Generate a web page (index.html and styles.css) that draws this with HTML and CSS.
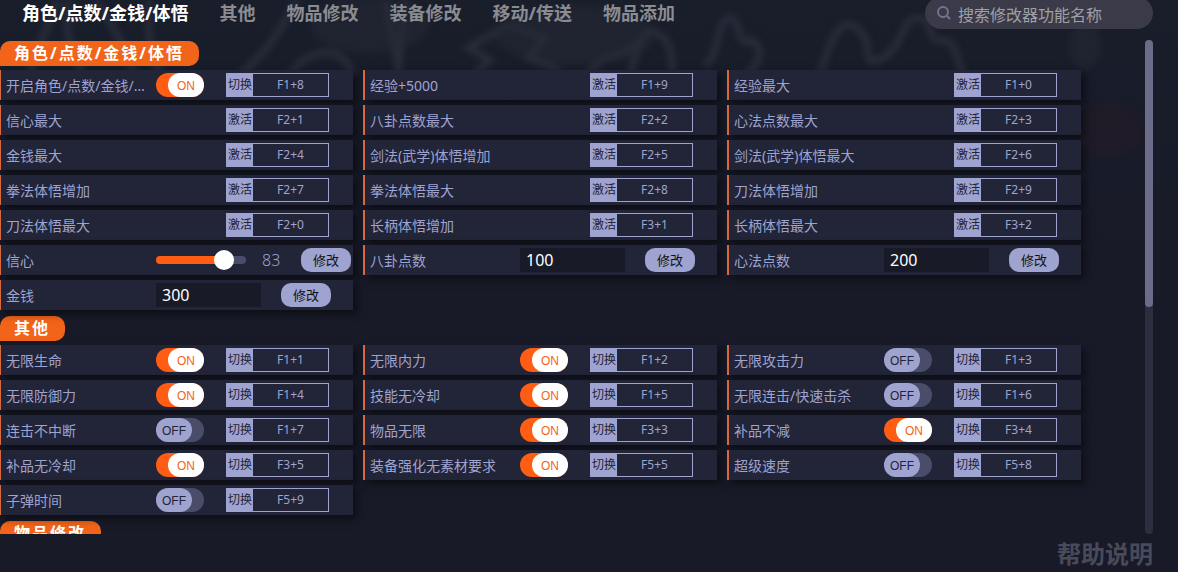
FILE: index.html
```html
<!DOCTYPE html>
<html lang="zh-CN">
<head>
  <meta charset="UTF-8">
  <meta name="viewport" content="width=device-width, initial-scale=1.0">
  <title>修改器</title>
  <link rel="stylesheet" href="styles.css">
</head>
<body>
  <svg class="backdrop" viewBox="0 0 1178 250" aria-hidden="true">
    <path d="M30 75C40 40 50 20 58 0M70 -5C62 20 70 50 82 72M92 -5C110 20 125 45 135 75M150 -5C145 25 150 50 160 75M240 75C275 45 285 20 300 -5M290 75C310 45 345 45 352 75M385 -5L400 75M405 0L398 75M508 25L468 48L490 60L474 75M508 25L545 38L528 58L560 70M590 75C600 50 625 60 640 40M630 75C640 40 645 25 655 32C672 40 672 55 672 72M705 65C720 55 715 25 728 18C742 15 735 50 752 40C765 50 760 65 745 75M820 75C835 20 850 12 866 40C870 55 865 65 878 60C905 50 900 15 920 18C935 20 925 45 945 40C960 45 955 65 965 75"/>
    <ellipse class="smoke" cx="370" cy="25" rx="60" ry="28"/>
    <ellipse class="smoke" cx="575" cy="35" rx="80" ry="30"/>
    <ellipse class="smoke" cx="1085" cy="45" rx="16" ry="24"/>
    <ellipse class="ember" cx="1110" cy="130" rx="32" ry="28"/>
  </svg>

  <header class="topbar">
    <nav class="tabs">
      <a href="#role" class="active">角色/点数/金钱/体悟</a>
      <a href="#other">其他</a>
      <a href="#item-edit">物品修改</a>
      <a href="#equip-edit">装备修改</a>
      <a href="#move">移动/传送</a>
      <a href="#item-add">物品添加</a>
    </nav>
    <label class="search">
      <svg viewBox="0 0 14 14" aria-hidden="true">
        <circle cx="6" cy="6" r="5"/>
        <path d="M10 10L13 13"/>
      </svg>
      <input type="search" placeholder="搜索修改器功能名称" aria-label="搜索修改器功能名称">
    </label>
  </header>

  <main class="panel">
    <div class="list" id="list"></div>
    <div class="scrollbar"><div class="thumb"></div></div>
  </main>

  <footer class="footer">
    <a href="#help">帮助说明</a>
  </footer>

  <script src="script.js"></script>
</body>
</html>
```
FILE: styles.css
```css
* {
  box-sizing: border-box;
}

body {
  margin: 0;
  height: 100vh;
  display: flex;
  flex-direction: column;
  overflow: hidden;
  background: linear-gradient(#191e2b, #181a28 45%);
  color: #9fa3cf;
  font-family: "Noto Sans", "Noto Sans CJK SC", sans-serif;
  font-size: 14px;
}

button, input {
  font-family: inherit;
}

a {
  text-decoration: none;
}

/* faint smoke behind everything */
.backdrop {
  position: absolute;
  top: 0;
  left: 0;
  width: 100%;
  z-index: -1;
  filter: blur(3px);
}

.backdrop path {
  fill: none;
  stroke: #292c39;
  stroke-width: 7;
}

.backdrop .smoke {
  fill: #262a36;
  opacity: 0.5;
}

.backdrop .ember {
  fill: #241a26;
  opacity: 0.6;
}

/* top bar */
.topbar {
  display: flex;
  justify-content: space-between;
  align-items: flex-start;
  height: 40px;
  flex: none;
  padding: 0 25px 0 22px;
}

.tabs {
  display: flex;
  gap: 31px;
  line-height: 26px;
  font-size: 18px;
  font-weight: bold;
  white-space: nowrap;
}

.tabs a {
  color: #8a8c92;
}

.tabs a.active {
  color: #fff;
}

.search {
  display: flex;
  align-items: center;
  gap: 7px;
  width: 228px;
  height: 32px;
  margin-top: -3px;
  padding: 0 12px;
  border-radius: 16px;
  background: #3a3a48;
}

.search svg {
  flex: none;
  width: 14px;
  height: 14px;
  fill: none;
  stroke: #717390;
  stroke-width: 2;
}

.search input {
  flex: 1;
  min-width: 0;
  padding: 4px 0 0;
  border: none;
  outline: none;
  background: none;
  color: #fff;
  font-size: 16px;
}

.search input::placeholder {
  color: #a0a0a6;
}

/* list of features */
.panel {
  flex: 1;
  min-height: 0;
  display: flex;
  padding-right: 25px;
}

.list {
  flex: 1;
  overflow: hidden;
  margin-left: -1px;
  padding-right: 64px;
}

.scrollbar {
  width: 8px;
  border-radius: 4px;
  background: #2c2e40;
}

.thumb {
  height: 54%;
  border-radius: 4px;
  background: #6a6c8a;
}

.section {
  padding-top: 1px;
}

.section h2 {
  width: fit-content;
  height: 25px;
  margin: 0 0 4px 1px;
  padding: 0 15px 0 14px;
  border-radius: 10px 10px 10px 0;
  background: #f26419;
  color: #fff;
  font-size: 16px;
  line-height: 24px;
  letter-spacing: 2px;
}

.cards {
  display: grid;
  grid-template-columns: repeat(3, minmax(0, 1fr));
  gap: 5px 10px;
  padding-bottom: 5px;
}

.card {
  display: flex;
  align-items: center;
  height: 30px;
  padding-left: 5px;
  border-left: 2px solid #d9683a;
  background: #222437;
  box-shadow: 4px 4px 8px rgba(0, 0, 0, 0.5);
}

.name {
  flex: none;
  width: 150px;
  padding-right: 6px;
  overflow: hidden;
  text-overflow: ellipsis;
  white-space: nowrap;
}

.slot {
  flex: none;
  width: 70px;
}

/* on/off switch */
.toggle {
  display: block;
  position: relative;
  width: 48px;
  height: 24px;
  border-radius: 12px;
  background: #4a4d6a;
  cursor: pointer;
}

.toggle input {
  position: absolute;
  inset: 0;
  margin: 0;
  opacity: 0;
}

.knob {
  display: block;
  width: 36px;
  height: 24px;
  border-radius: 12px;
  background: #9fa3cf;
  color: #222437;
  font: 12px/26px "Liberation Sans", Arial, sans-serif;
  text-align: center;
}

.toggle.on {
  background: #ff5c14;
}

.toggle.on .knob {
  margin-left: 12px;
  background: #fff;
  color: #f26419;
}

/* hotkey */
.hotkey {
  display: flex;
  width: 103px;
  height: 24px;
  padding: 0;
  border: 1px solid #9fa3cf;
  background: none;
  color: #9fa3cf;
  font-size: 12px;
  line-height: 22px;
  cursor: pointer;
}

.hotkey .action {
  width: 26px;
  background: #9fa3cf;
  color: #222437;
}

.hotkey .keys {
  flex: 1;
}

/* value rows */
.number {
  width: 105px;
  height: 24px;
  margin-right: 20px;
  padding: 0 6px;
  border: none;
  background: #181a28;
  color: #fff;
  font-size: 16px;
}

.apply {
  width: 50px;
  height: 24px;
  padding: 0;
  border: none;
  border-radius: 10px;
  background: #9fa3cf;
  color: #111;
  font-size: 13px;
  line-height: 24px;
  cursor: pointer;
}

.slider {
  appearance: none;
  width: 90px;
  height: 8px;
  margin: 0;
  border-radius: 4px;
  background: linear-gradient(to right, #ff5c14 var(--value), #4a4d6a var(--value));
}

.slider::-webkit-slider-thumb {
  appearance: none;
  width: 20px;
  height: 20px;
  border-radius: 50%;
  background: #fff;
}

.slider-value {
  width: 55px;
  padding-left: 16px;
  font-size: 16px;
  font-weight: 300;
}

/* footer */
.footer {
  display: flex;
  justify-content: flex-end;
  height: 38px;
  flex: none;
  padding-right: 25px;
  line-height: 40px;
}

.footer a {
  color: #484a59;
  font-size: 24px;
  font-weight: bold;
}
```
FILE: script.js
```js
const sections = [
  {
    id: "role",
    title: "角色/点数/金钱/体悟",
    items: [
      { name: "开启角色/点数/金钱/体悟", type: "toggle", on: true, keys: "F1+8" },
      { name: "经验+5000", type: "action", keys: "F1+9" },
      { name: "经验最大", type: "action", keys: "F1+0" },
      { name: "信心最大", type: "action", keys: "F2+1" },
      { name: "八卦点数最大", type: "action", keys: "F2+2" },
      { name: "心法点数最大", type: "action", keys: "F2+3" },
      { name: "金钱最大", type: "action", keys: "F2+4" },
      { name: "剑法(武学)体悟增加", type: "action", keys: "F2+5" },
      { name: "剑法(武学)体悟最大", type: "action", keys: "F2+6" },
      { name: "拳法体悟增加", type: "action", keys: "F2+7" },
      { name: "拳法体悟最大", type: "action", keys: "F2+8" },
      { name: "刀法体悟增加", type: "action", keys: "F2+9" },
      { name: "刀法体悟最大", type: "action", keys: "F2+0" },
      { name: "长柄体悟增加", type: "action", keys: "F3+1" },
      { name: "长柄体悟最大", type: "action", keys: "F3+2" },
      { name: "信心", type: "slider", value: 83 },
      { name: "八卦点数", type: "number", value: 100 },
      { name: "心法点数", type: "number", value: 200 },
      { name: "金钱", type: "number", value: 300 }
    ]
  },
  {
    id: "other",
    title: "其他",
    items: [
      { name: "无限生命", type: "toggle", on: true, keys: "F1+1" },
      { name: "无限内力", type: "toggle", on: true, keys: "F1+2" },
      { name: "无限攻击力", type: "toggle", on: false, keys: "F1+3" },
      { name: "无限防御力", type: "toggle", on: true, keys: "F1+4" },
      { name: "技能无冷却", type: "toggle", on: true, keys: "F1+5" },
      { name: "无限连击/快速击杀", type: "toggle", on: false, keys: "F1+6" },
      { name: "连击不中断", type: "toggle", on: false, keys: "F1+7" },
      { name: "物品无限", type: "toggle", on: true, keys: "F3+3" },
      { name: "补品不减", type: "toggle", on: true, keys: "F3+4" },
      { name: "补品无冷却", type: "toggle", on: true, keys: "F3+5" },
      { name: "装备强化无素材要求", type: "toggle", on: true, keys: "F5+5" },
      { name: "超级速度", type: "toggle", on: false, keys: "F5+8" },
      { name: "子弹时间", type: "toggle", on: false, keys: "F5+9" }
    ]
  },
  { id: "item-edit", title: "物品修改", items: [] }
];

function hotkey(action, keys) {
  return `<button class="hotkey"><span class="action">${action}</span><span class="keys">${keys}</span></button>`;
}

function controls(item, id) {
  if (item.type === "toggle") {
    return `<div class="slot"><label class="toggle ${item.on ? "on" : ""}">
      <input type="checkbox" id="${id}" ${item.on ? "checked" : ""}>
      <span class="knob">${item.on ? "ON" : "OFF"}</span>
    </label></div>` + hotkey("切换", item.keys);
  }
  if (item.type === "action") {
    return `<div class="slot"></div>` + hotkey("激活", item.keys);
  }
  if (item.type === "slider") {
    return `<input type="range" class="slider" id="${id}" value="${item.value}" style="--value: ${item.value}%">
      <output class="slider-value" for="${id}">${item.value}</output>
      <button class="apply">修改</button>`;
  }
  return `<input type="text" class="number" id="${id}" value="${item.value}">
    <button class="apply">修改</button>`;
}

function card(item, id) {
  const name = item.type === "action"
    ? `<span class="name">${item.name}</span>`
    : `<label class="name" for="${id}">${item.name}</label>`;
  return `<div class="card">${name}${controls(item, id)}</div>`;
}

const list = document.getElementById("list");

list.innerHTML = sections.map(section => `
  <section class="section" id="${section.id}">
    <h2>${section.title}</h2>
    <div class="cards">${section.items.map((item, i) => card(item, section.id + "-" + i)).join("")}</div>
  </section>`).join("");

list.addEventListener("input", function (e) {
  if (e.target.type === "checkbox") {
    const toggle = e.target.parentElement;
    toggle.classList.toggle("on", e.target.checked);
    toggle.querySelector(".knob").textContent = e.target.checked ? "ON" : "OFF";
  }
  if (e.target.type === "range") {
    e.target.style.setProperty("--value", e.target.value + "%");
    e.target.nextElementSibling.textContent = e.target.value;
  }
});
```
